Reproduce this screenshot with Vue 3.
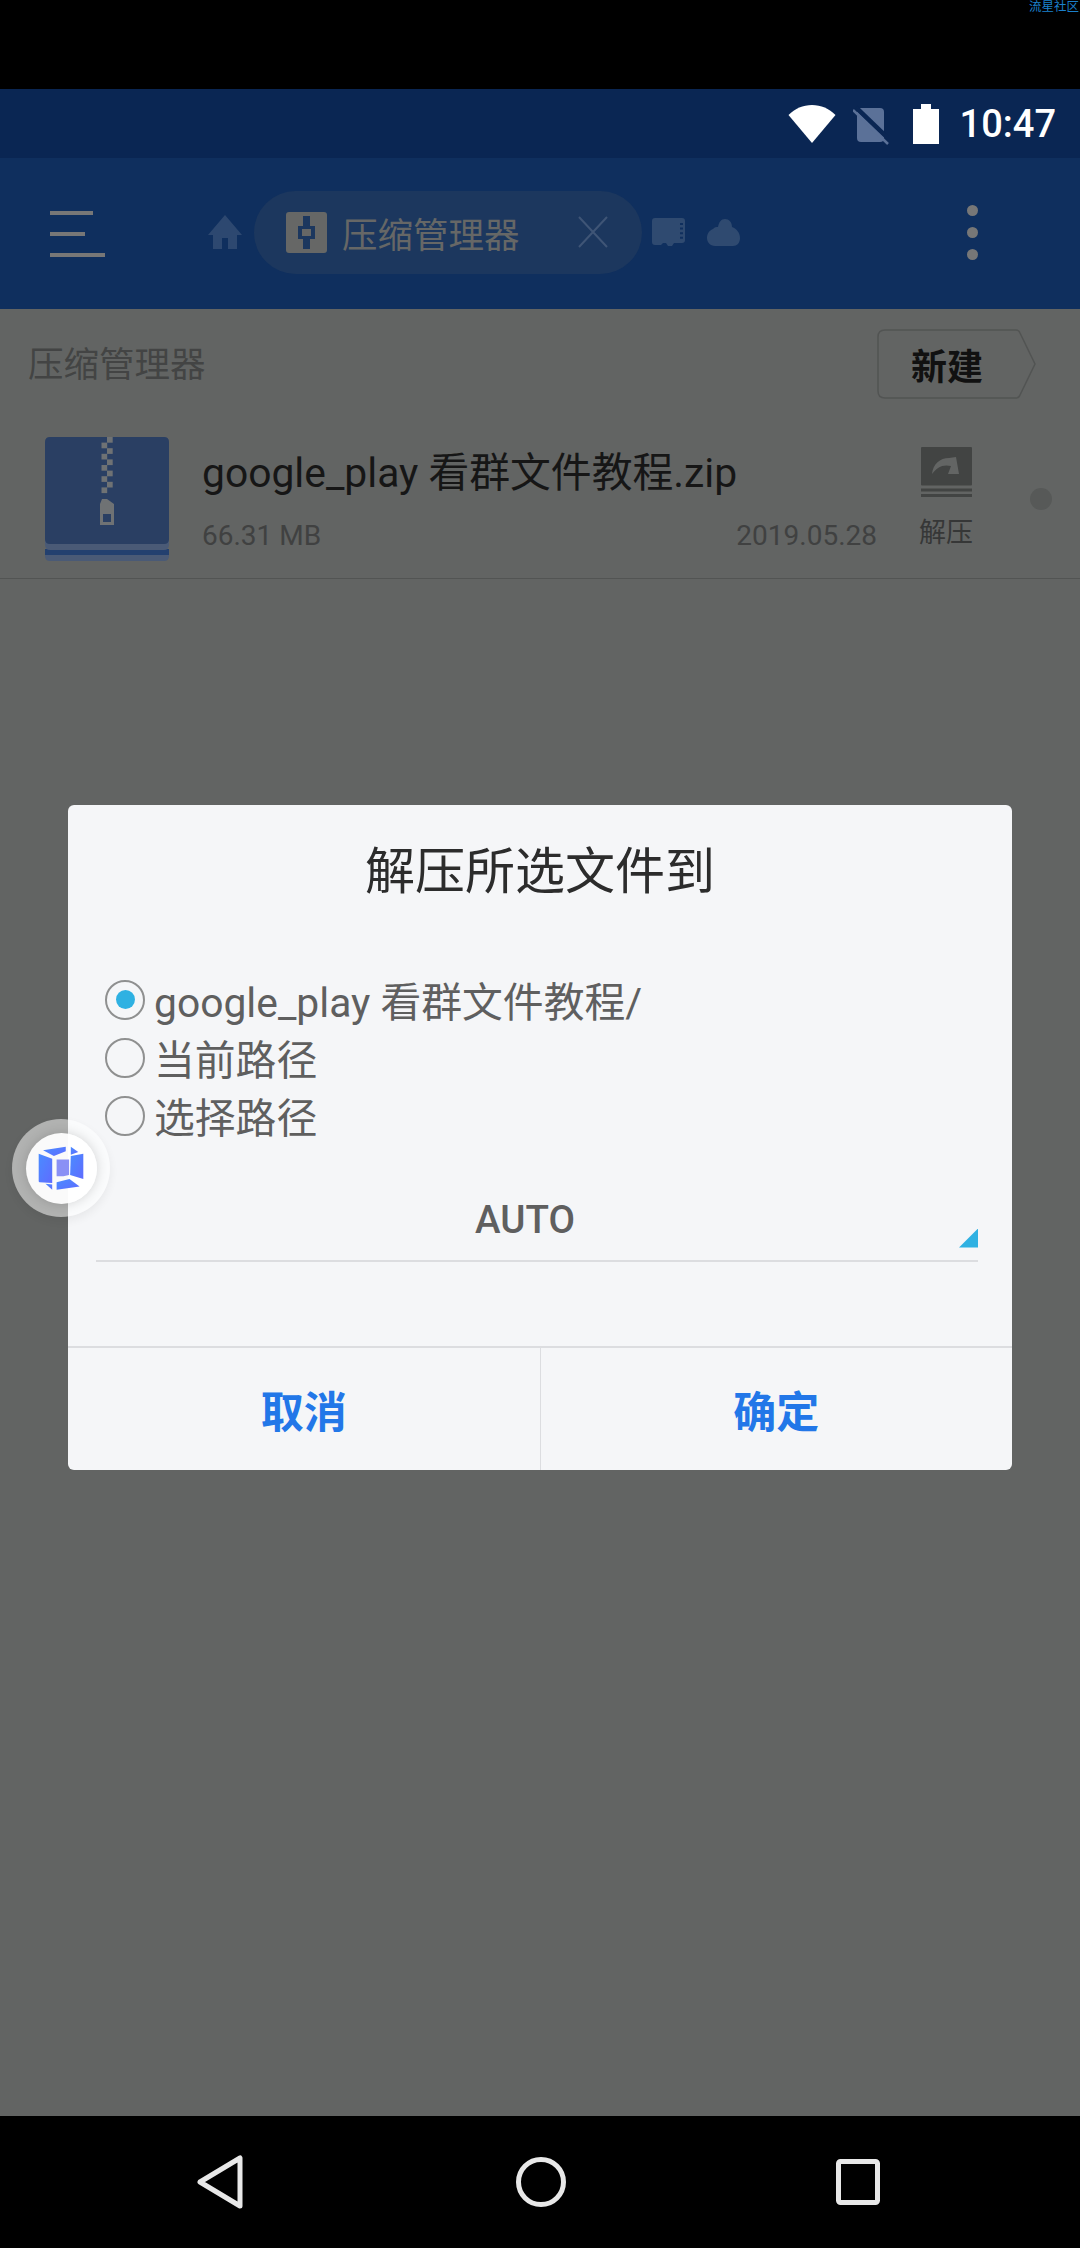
<script setup>
const options = [
  { label: "google_play 看群文件教程/", checked: true },
  { label: "当前路径", checked: false },
  { label: "选择路径", checked: false },
];
const menuLines = [43, 35, 55];
// zipper teeth alternate left / right down the icon
const teeth = Array.from({ length: 10 }, (_, i) => ({
  x: i % 2 === 0 ? 62 : 56.5,
  y: i * 5.6,
}));
</script>

<template>
  <div class="phone">
    <div class="top-black">
      <span class="watermark">流星社区</span>
    </div>

    <div class="status-bar">
      <svg class="wifi" width="48" height="38" viewBox="0 0 48 38">
        <path d="M24 38 L0.5 10 C7 3.5 15 0 24 0 S41 3.5 47.5 10 Z" fill="#fff" />
      </svg>
      <svg class="sim" width="36" height="40" viewBox="0 0 36 40">
        <path d="M8 3 H27 Q31 3 31 7 V33 Q31 37 27 37 H8 Q4 37 4 33 V7 Q4 3 8 3 Z" fill="#5b7198" />
        <path d="M3 2.5 L38 36" stroke="#0a2653" stroke-width="4.5" />
        <path d="M0 5 L35 39" stroke="#5b7198" stroke-width="2.5" />
      </svg>
      <div class="battery">
        <div class="battery-nub"></div>
        <div class="battery-body"></div>
      </div>
      <span class="time">10:47</span>
    </div>

    <div class="toolbar">
      <div class="menu">
        <div v-for="w in menuLines" :key="w" class="menu-line" :style="{ width: w + 'px' }"></div>
      </div>
      <svg class="home" width="34" height="34" viewBox="0 0 34 34">
        <path d="M17 0 L34 20 H29 V34 H20 V23 H14 V34 H5 V20 H0 Z" fill="#2d4870" />
      </svg>
      <div class="tab">
        <svg width="41" height="41" viewBox="0 0 41 41">
          <rect width="41" height="41" rx="3" fill="#666766" />
          <path d="M17 4 H24 V14 H29 V27 H24 V37 H17 V27 H12 V14 H17 Z" fill="#1c375e" />
          <rect x="16" y="17" width="9" height="7" fill="#666766" />
        </svg>
        <span class="tab-title">压缩管理器</span>
        <svg class="tab-close" width="32" height="32" viewBox="0 0 32 32">
          <path d="M2 1 L30 31 M30 1 L2 31" stroke="#3f5576" stroke-width="2" />
        </svg>
      </div>
      <svg class="sd" width="33" height="28" viewBox="0 0 33 28">
        <path d="M3 0 H30 Q33 0 33 3 V22 Q33 25 30 25 H22 L20 28 H16 L14 25 H11 L9 27 H3 Q0 27 0 24 V3 Q0 0 3 0 Z" fill="#2f4a70" />
        <path d="M29.5 5 V22" stroke="#0f2f5e" stroke-width="3" stroke-dasharray="2 2.6" />
      </svg>
      <svg class="cloud" width="33" height="27" viewBox="0 0 33 27">
        <path d="M8 27 C3 27 0 23 0 19 C0 14 3 11 6 10 C8 8 9 8 11 8 C12 3 14 0 18 0 C22 0 25 3 25 8 C30 10 33 14 33 19 C33 24 30 27 26 27 Z" fill="#2f4a70" />
      </svg>
      <div class="more">
        <div class="more-dot"></div>
        <div class="more-dot"></div>
        <div class="more-dot"></div>
      </div>
    </div>

    <div class="content">
      <div class="section-row">
        <span class="section-title">压缩管理器</span>
        <div class="new-btn">
          <svg class="new-shape" width="160" height="70" viewBox="0 0 160 70">
            <path d="M8 1 H139 Q142 1 143 4 L158 35 L143 66 Q142 69 139 69 H8 Q1 69 1 62 V8 Q1 1 8 1 Z" fill="none" stroke="#525453" stroke-width="1.5" />
          </svg>
          <span class="new-label">新建</span>
        </div>
      </div>

      <div class="file-row">
        <svg class="zip" width="124" height="124" viewBox="0 0 124 124">
          <path d="M0 112 H124 V119 Q124 124 119 124 H5 Q0 124 0 119 Z" fill="#4a5a76" />
          <rect y="112" width="124" height="6" fill="#23406f" />
          <path d="M0 102 H124 V107 Q124 113 119 113 H5 Q0 113 0 107 Z" fill="#4a5a76" />
          <path d="M5 0 H119 Q124 0 124 5 V102 Q124 107 119 107 H5 Q0 107 0 102 V5 Q0 0 5 0 Z" fill="#2a3f63" />
          <rect v-for="t in teeth" :key="t.y" :x="t.x" :y="t.y" width="5.7" height="5.7" fill="#6f7274" />
          <path d="M57 62 H62 L69 67 V88 H55 V67 Z" fill="#6f7274" />
          <rect x="58" y="77" width="8" height="8" fill="#2a3f63" />
        </svg>
        <div class="file-info">
          <div class="file-name">google_play 看群文件教程.zip</div>
          <div class="file-meta">
            <span>66.31 MB</span>
            <span>2019.05.28</span>
          </div>
        </div>
        <div class="extract">
          <svg width="51" height="50" viewBox="0 0 51 50">
            <rect width="51" height="38.5" rx="1" fill="#424443" />
            <path d="M11 27 C12 17 19 11 28 11 L35 10 L38 27 L27 27 L30 19 C22 17 16 20 11 27 Z" fill="#636564" />
            <rect y="41.5" width="51" height="3" fill="#424443" />
            <rect y="47" width="51" height="3" fill="#424443" />
          </svg>
          <span class="extract-label">解压</span>
        </div>
        <div class="row-dot"></div>
      </div>
    </div>

    <div class="nav-bar">
      <svg width="46" height="54" viewBox="0 0 46 54">
        <path d="M43 3 V51 L3 27 Z" fill="none" stroke="#e8e8e8" stroke-width="5" stroke-linejoin="round" />
      </svg>
      <svg width="50" height="50" viewBox="0 0 50 50">
        <circle cx="25" cy="25" r="22.5" fill="none" stroke="#e8e8e8" stroke-width="5" />
      </svg>
      <svg width="44" height="46" viewBox="0 0 44 46">
        <rect x="2.5" y="2.5" width="39" height="41" rx="2" fill="none" stroke="#e8e8e8" stroke-width="5" />
      </svg>
    </div>

    <!-- dialog sits over the dimmed app area -->
    <div class="overlay">
      <div class="dialog">
        <div class="dialog-title">解压所选文件到</div>
        <div class="radio-list">
          <div v-for="o in options" :key="o.label" class="radio-row">
            <span class="radio" :class="{ checked: o.checked }"></span>
            <span class="radio-label">{{ o.label }}</span>
          </div>
        </div>
        <div class="select">
          <span class="select-value">AUTO</span>
          <span class="select-arrow"></span>
        </div>
        <div class="dialog-actions">
          <div class="action">取消</div>
          <div class="action">确定</div>
        </div>
      </div>
    </div>

    <div class="fab">
      <div class="fab-inner">
        <svg width="48" height="46" viewBox="110 140 142 135">
          <defs>
            <linearGradient id="cube" x1="0" y1="0" x2="1" y2="1">
              <stop offset="0" stop-color="#4a8cff" />
              <stop offset="1" stop-color="#5f6cff" />
            </linearGradient>
          </defs>
          <path d="M128 155 L195 145 V158 L160 172 Z" fill="url(#cube)" />
          <path d="M210 145 L232 160 L210 168 Z" fill="url(#cube)" />
          <path d="M115 165 L155 180 V252 L118 250 Q115 250 115 246 Z" fill="url(#cube)" />
          <path d="M210 172 L247 165 V240 L208 228 Z" fill="url(#cube)" />
          <path d="M168 182 H205 V228 L188 232 L168 232 Z" fill="#8a90f5" />
          <path d="M135 254 L155 256 V272 Z" fill="url(#cube)" />
          <path d="M168 250 L206 240 L236 262 L168 272 Z" fill="url(#cube)" />
        </svg>
      </div>
    </div>
  </div>
</template>

<style scoped>
.phone {
  position: relative;
  width: 1080px;
  height: 2248px;
  display: flex;
  flex-direction: column;
  overflow: hidden;
  background: #626463;
  font-family: Roboto, "Noto Sans CJK SC", sans-serif;
}

.top-black {
  height: 89px;
  background: #000;
  display: flex;
  justify-content: flex-end;
  align-items: flex-start;
  padding-right: 1px;
}
.watermark {
  font-size: 12.5px;
  line-height: 13px;
  color: #1b80cc;
}

.status-bar {
  height: 69px;
  background: #0a2653;
  display: flex;
  align-items: center;
  padding-right: 24px;
  justify-content: flex-end;
}
.wifi {
  margin-right: 17px;
  margin-top: 1px;
}
.sim {
  margin-right: 24px;
  margin-top: 2px;
}
.battery {
  width: 26px;
  height: 40px;
  display: flex;
  flex-direction: column;
  align-items: center;
  margin-right: 21px;
}
.battery-nub {
  width: 10px;
  height: 5px;
  background: #fff;
}
.battery-body {
  width: 26px;
  flex: 1;
  background: #fff;
}
.time {
  color: #fff;
  font-size: 38px;
  font-weight: 500;
}

.toolbar {
  height: 151px;
  box-sizing: border-box;
  padding-bottom: 3px;
  background: #0f2f5e;
  display: flex;
  align-items: center;
  position: relative;
}
.menu {
  width: 55px;
  margin-left: 50px;
  margin-top: 3px;
  display: flex;
  flex-direction: column;
  gap: 17px;
}
.menu-line {
  height: 4px;
  background: #777;
}
.home {
  margin-left: 103px;
}
.tab {
  margin-left: 12px;
  width: 388px;
  height: 83px;
  border-radius: 42px;
  background: #1c375e;
  display: flex;
  align-items: center;
  padding-left: 32px;
  box-sizing: border-box;
}
.tab-title {
  margin-left: 15px;
  font-size: 35.5px;
  color: #666766;
}
.tab-close {
  margin-left: 57px;
}
.sd {
  margin-left: 10px;
}
.cloud {
  margin-left: 22px;
}
.more {
  margin-left: auto;
  margin-right: 102px;
  display: flex;
  flex-direction: column;
  gap: 11px;
}
.more-dot {
  width: 11px;
  height: 11px;
  border-radius: 50%;
  background: #777;
}

.content {
  flex: 1;
  background: #626463;
}
.section-row {
  height: 109px;
  padding: 20px 43px 0 28px;
  box-sizing: border-box;
  display: flex;
  align-items: flex-start;
  justify-content: space-between;
}
.section-title {
  font-size: 35.5px;
  line-height: 72px;
  color: #434444;
}
.new-btn {
  position: relative;
  width: 160px;
  height: 70px;
  display: flex;
  align-items: center;
  padding-left: 34px;
  box-sizing: border-box;
}
.new-shape {
  position: absolute;
  left: 0;
  top: 0;
}
.new-label {
  position: relative;
  font-size: 36px;
  font-weight: 700;
  color: #111;
}

.file-row {
  height: 160px;
  border-bottom: 1px solid #525453;
  display: flex;
  align-items: flex-start;
  padding-left: 45px;
  position: relative;
}
.zip {
  flex-shrink: 0;
  margin-top: 19px;
}
.file-info {
  width: 675px;
  margin-left: 33px;
}
.file-name {
  margin-top: 25px;
  font-size: 40.8px;
  line-height: 60px;
  color: #161616;
  white-space: nowrap;
}
.file-meta {
  margin-top: 13px;
  display: flex;
  justify-content: space-between;
  font-size: 28px;
  line-height: 40px;
  color: #404141;
}
.extract {
  margin-left: 42px;
  margin-top: 29px;
  display: flex;
  flex-direction: column;
  align-items: center;
  width: 54px;
}
.extract-label {
  font-size: 27px;
  line-height: 40px;
  margin-top: 16px;
  color: #363737;
  white-space: nowrap;
}
.row-dot {
  position: absolute;
  left: 1030px;
  top: 70px;
  width: 22px;
  height: 22px;
  border-radius: 50%;
  background: #575958;
}

.nav-bar {
  height: 132px;
  background: #000;
  position: relative;
  display: flex;
  align-items: center;
  padding-left: 197px;
  box-sizing: border-box;
}
.nav-bar svg:nth-child(2) {
  margin-left: 273px;
}
.nav-bar svg:nth-child(3) {
  margin-left: 270px;
}

.overlay {
  position: absolute;
  left: 0;
  top: 158px;
  width: 1080px;
  height: 1958px;
  display: flex;
  align-items: center;
  justify-content: center;
}
.dialog {
  width: 944px;
  height: 665px;
  background: #f5f6f8;
  border-radius: 6px;
  display: flex;
  flex-direction: column;
}
.dialog-title {
  height: 132px;
  line-height: 134px;
  text-align: center;
  font-size: 50px;
  color: #2c2c2c;
}
.radio-list {
  margin-top: 34px;
  padding-left: 37px;
}
.radio-row {
  height: 58px;
  display: flex;
  align-items: center;
}
.radio {
  width: 40px;
  height: 40px;
  border-radius: 50%;
  border: 2px solid #8f9090;
  box-sizing: border-box;
  display: flex;
  align-items: center;
  justify-content: center;
  flex-shrink: 0;
}
.radio.checked::after {
  content: "";
  width: 19px;
  height: 19px;
  border-radius: 50%;
  background: #2fb1e2;
}
.radio-label {
  margin-left: 9px;
  font-size: 40.8px;
  color: #5f5f5f;
  white-space: nowrap;
}
.select {
  position: relative;
  margin: 0 34px 0 28px;
  height: 117px;
  border-bottom: 2px solid #dcdde0;
  box-sizing: border-box;
  padding: 48px 24px 0 0;
  text-align: center;
}
.select-value {
  font-size: 38.5px;
  line-height: 54px;
  font-weight: 500;
  color: #5f5f5f;
}
.select-arrow {
  position: absolute;
  right: 0;
  bottom: 12px;
  width: 19px;
  height: 19px;
  background: #2fb1e2;
  clip-path: polygon(100% 0, 100% 100%, 0 100%);
}
.dialog-actions {
  margin-top: 84px;
  flex: 1;
  display: flex;
  border-top: 2px solid #dcdde0;
}
.action {
  flex: 1;
  display: flex;
  align-items: center;
  justify-content: center;
  font-size: 43px;
  font-weight: 700;
  color: #2277e8;
}
.action + .action {
  border-left: 1px solid #dcdde0;
}

.fab {
  position: absolute;
  left: 12px;
  top: 1119px;
  width: 98px;
  height: 98px;
  border-radius: 50%;
  background: rgba(255, 255, 255, 0.5);
  display: flex;
  align-items: center;
  justify-content: center;
  box-shadow: 0 4px 10px rgba(0, 0, 0, 0.06);
}
.fab-inner {
  width: 71px;
  height: 71px;
  border-radius: 50%;
  background: rgba(255, 255, 255, 0.93);
  display: flex;
  align-items: center;
  justify-content: center;
  box-shadow: 0 0 12px rgba(0, 0, 0, 0.16);
}
</style>
